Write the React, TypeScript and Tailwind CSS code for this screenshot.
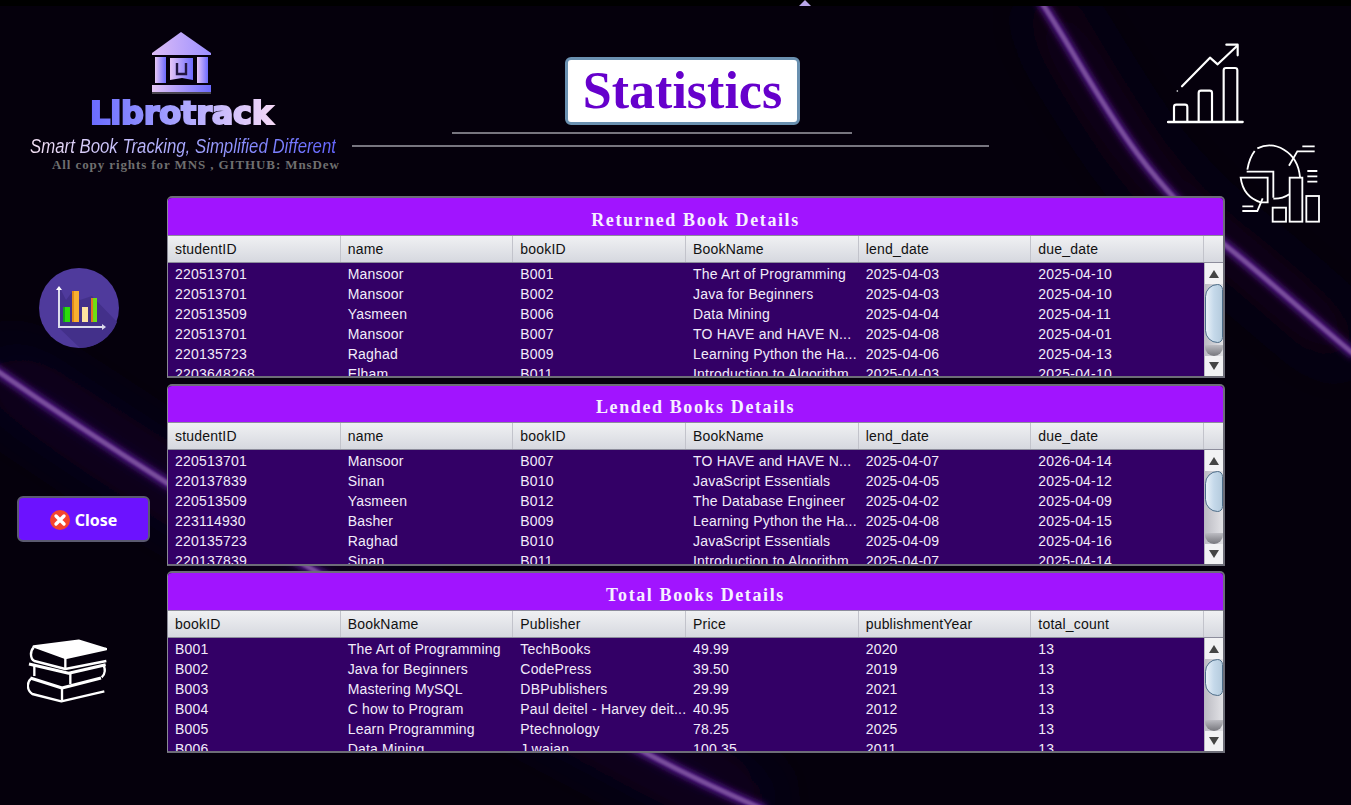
type PanelProps = {
  title: string;
  columns: string[];
  rows: string[][];
  thumbH: string;
  titleH: string;
};

const returned = [
  ["220513701", "Mansoor", "B001", "The Art of Programming", "2025-04-03", "2025-04-10"],
  ["220513701", "Mansoor", "B002", "Java for Beginners", "2025-04-03", "2025-04-10"],
  ["220513509", "Yasmeen", "B006", "Data Mining", "2025-04-04", "2025-04-11"],
  ["220513701", "Mansoor", "B007", "TO HAVE and HAVE N...", "2025-04-08", "2025-04-01"],
  ["220135723", "Raghad", "B009", "Learning Python the Ha...", "2025-04-06", "2025-04-13"],
  ["2203648268", "Elham", "B011", "Introduction to Algorithm...", "2025-04-03", "2025-04-10"],
];

const lended = [
  ["220513701", "Mansoor", "B007", "TO HAVE and HAVE N...", "2025-04-07", "2026-04-14"],
  ["220137839", "Sinan", "B010", "JavaScript Essentials", "2025-04-05", "2025-04-12"],
  ["220513509", "Yasmeen", "B012", "The Database Engineer", "2025-04-02", "2025-04-09"],
  ["223114930", "Basher", "B009", "Learning Python the Ha...", "2025-04-08", "2025-04-15"],
  ["220135723", "Raghad", "B010", "JavaScript Essentials", "2025-04-09", "2025-04-16"],
  ["220137839", "Sinan", "B011", "Introduction to Algorithm...", "2025-04-07", "2025-04-14"],
];

const total = [
  ["B001", "The Art of Programming", "TechBooks", "49.99", "2020", "13"],
  ["B002", "Java for Beginners", "CodePress", "39.50", "2019", "13"],
  ["B003", "Mastering MySQL", "DBPublishers", "29.99", "2021", "13"],
  ["B004", "C how to Program", "Paul deitel - Harvey deit...", "40.95", "2012", "13"],
  ["B005", "Learn Programming", "Ptechnology", "78.25", "2025", "13"],
  ["B006", "Data Mining", "J.waian", "100.35", "2011", "13"],
];

const lendCols = ["studentID", "name", "bookID", "BookName", "lend_date", "due_date"];
const bookCols = ["bookID", "BookName", "Publisher", "Price", "publishmentYear", "total_count"];

const curveA = "M1040,0 C1090,75 1130,170 1225,245 C1270,281 1310,318 1355,355";
const curveB = "M-10,366 Q75,425 167,483 Q400,625 646,753 Q700,782 765,810";

function Background() {
  return (
    <svg className="absolute inset-x-0 top-[6px] w-full h-[799px]" viewBox="0 6 1351 799">
      <defs>
        <filter id="wide" filterUnits="userSpaceOnUse" x="-200" y="-200" width="1800" height="1200">
          <feGaussianBlur stdDeviation="32" />
        </filter>
        <filter id="glow" filterUnits="userSpaceOnUse" x="-200" y="-200" width="1800" height="1200">
          <feGaussianBlur stdDeviation="3" />
        </filter>
        <filter id="soft" filterUnits="userSpaceOnUse" x="-200" y="-200" width="1800" height="1200">
          <feGaussianBlur stdDeviation="0.8" />
        </filter>
      </defs>
      <g fill="none">
        <path d={curveB} stroke="#160630" strokeWidth="40" filter="url(#wide)" />
        <path d={curveA} stroke="#140528" strokeWidth="30" filter="url(#wide)" />
        <path d={curveB} stroke="#4f1485" strokeWidth="10" filter="url(#glow)" />
        <path d={curveA} stroke="#4f1485" strokeWidth="10" filter="url(#glow)" />
        <path d={curveB} stroke="#7a4f9c" strokeWidth="4.5" filter="url(#soft)" />
        <path d={curveA} stroke="#7a4f9c" strokeWidth="4.5" filter="url(#soft)" />
      </g>
    </svg>
  );
}

function LogoMark() {
  return (
    <svg width="60" height="62" viewBox="152 32 60 62">
      <defs>
        <linearGradient id="roof" x1="0" x2="1" y1="0" y2="0">
          <stop offset="0" stopColor="#dcbcf6" />
          <stop offset="1" stopColor="#9c90ff" />
        </linearGradient>
        <linearGradient id="pillar" x1="0" x2="1" y1="0" y2="0">
          <stop offset="0" stopColor="#e6c6f6" />
          <stop offset="1" stopColor="#6d6bff" />
        </linearGradient>
      </defs>
      <polygon points="181,32 211,53 211,55 152,55 152,53" fill="url(#roof)" />
      <rect x="155" y="57" width="11" height="26" fill="url(#pillar)" />
      <path d="M170 58 H193 V80 L182 78 L170 80 Z" fill="url(#pillar)" />
      <path d="M177 63 V74 H186 V63" fill="none" stroke="#221640" strokeWidth="2.4" />
      <rect x="197" y="57" width="11" height="26" fill="url(#pillar)" />
      <rect x="152" y="85" width="59" height="7" fill="url(#pillar)" />
      <rect x="152" y="92" width="59" height="2" fill="#4a4650" />
    </svg>
  );
}

function ChartUpIcon() {
  return (
    <svg width="78" height="82" viewBox="198 125 234 246" fill="none" stroke="white" strokeWidth="6.5" strokeLinecap="round" strokeLinejoin="round">
      <path d="M201 365 H425" strokeWidth="7" />
      <path d="M219 362 V320 Q219 313 226 313 H252 Q259 313 259 320 V362" />
      <path d="M293 362 V278 Q293 271 300 271 H326 Q333 271 333 278 V362" />
      <path d="M368 362 V210 Q368 203 375 203 H402 Q409 203 409 210 V362" />
      <path d="M243 258 L327 172 L350 192 L408 137" />
      <path d="M376 133 H410 V165" />
      <circle cx="229" cy="272" r="2.5" fill="white" stroke="none" />
    </svg>
  );
}

function PieBarsIcon() {
  return (
    <svg width="82" height="81" viewBox="415 428 246 243" fill="none" stroke="white" strokeWidth="5.5">
      <path d="M440 508 C444 485 452 465 462 452 M470 444 C520 420 590 450 598 530" />
      <path d="M438 514 H518 V592" />
      <path d="M518 595 Q545 596 566 582" />
      <path d="M420 532 H501 V606 H480 C445 595 425 570 420 532 Z" />
      <path d="M565 496 L590 453 H642 M605 438 H642" />
      <path d="M620 512 H650 M620 528 H650 M620 544 H650" />
      <path d="M425 618 H458 M425 632 H470 L486 594" />
      <rect x="516" y="622" width="40" height="42" />
      <rect x="567" y="532" width="38" height="132" />
      <rect x="617" y="587" width="38" height="77" />
    </svg>
  );
}

function BarsBadge() {
  return (
    <svg width="80" height="80" viewBox="39 268 80 80">
      <circle cx="79" cy="308" r="40" fill="#4f3a9c" />
      <path d="M60 288 L66 300 L72 292 L80 300 L92 296 L117 322 A40 40 0 0 1 80 348 L58 327 Z" fill="#43308a" />
      <rect x="58" y="288" width="2" height="40" fill="#dcdcec" />
      <rect x="58" y="326" width="46" height="2" fill="#dcdcec" />
      <polygon points="59,286 56,290 62,290" fill="#ffffff" />
      <polygon points="106,327 102,324 102,330" fill="#dcdcec" />
      <rect x="63" y="307" width="7" height="15" fill="#2bdc0a" />
      <rect x="63" y="307" width="2" height="15" fill="#14a020" />
      <rect x="72" y="291" width="7" height="31" fill="#f8b030" />
      <rect x="72" y="291" width="2" height="31" fill="#e08a18" />
      <rect x="82" y="307" width="6" height="15" fill="#fde3a0" />
      <rect x="91" y="298" width="6" height="24" fill="#6ee012" />
      <rect x="91" y="298" width="2" height="24" fill="#e07820" />
    </svg>
  );
}

function BooksIcon() {
  return (
    <svg width="80" height="65" viewBox="80 475 240 195" fill="none" stroke="white" strokeWidth="7" strokeLinejoin="round">
      <polygon points="100,497 235,480 318,505 195,532" fill="white" />
      <path d="M100 500 C88 512 90 535 102 541 L195 565 L318 541" />
      <path d="M195 532 V565" />
      <path d="M86 550 L205 578 L316 552" strokeWidth="9" />
      <path d="M306 552 C318 562 314 582 304 590" />
      <path d="M102 556 V586 M210 578 V610" />
      <path d="M90 592 L185 622 L302 592" strokeWidth="10" />
      <path d="M92 594 C78 606 80 630 96 640 L183 662 L312 632" />
      <path d="M185 622 V660" />
    </svg>
  );
}

function CloseIcon() {
  return (
    <svg width="20" height="20" viewBox="0 0 20 20">
      <circle cx="10" cy="10" r="10" fill="#f4442e" />
      <path d="M6 6 L14 14 M14 6 L6 14" stroke="white" strokeWidth="3.4" strokeLinecap="round" />
    </svg>
  );
}

function Scrollbar({ thumbH }: { thumbH: string }) {
  return (
    <div className="w-[19px] shrink-0 flex flex-col bg-[#f2f2f4] border-l border-[#b8b8c0]">
      <div className="h-[21px] shrink-0 flex items-center justify-center">
        <svg width="10" height="10" viewBox="0 0 10 10"><polygon points="5,1 10,9 0,9" fill="#444444" /></svg>
      </div>
      <div className="flex-1 bg-linear-to-r from-[#bdbdc4] to-[#e2e2e6] flex flex-col overflow-hidden">
        <div className={`${thumbH} shrink-0 rounded-l-[14px] rounded-r-[6px] border border-[#4c6c88] bg-linear-to-r from-[#e9f1f8] via-[#c5d9ea] to-[#b5cbdd]`} />
        <div className="flex-1" />
        <div className="h-[11px] bg-linear-to-b from-[#bcbcc2] to-[#77777d] rounded-b-[10px]" />
      </div>
      <div className="h-[20px] shrink-0 flex items-center justify-center">
        <svg width="10" height="10" viewBox="0 0 10 10"><polygon points="0,1 10,1 5,9" fill="#444444" /></svg>
      </div>
    </div>
  );
}

function Panel({ title, columns, rows, thumbH, titleH }: PanelProps) {
  return (
    <section className="h-[182px] flex flex-col rounded-t-[5px] border-y-2 border-r-2 border-l border-[#6d6d78] border-l-[#8a8a96] overflow-hidden">
      <h2 className={`${titleH} shrink-0 pt-[7px] flex items-center justify-center bg-[#a114ff] text-[#f6f0ff] text-[18px] font-bold tracking-[1.6px] font-['Liberation_Serif',serif]`}>
        {title}
      </h2>
      <div className="h-[28px] shrink-0 flex bg-linear-to-b from-[#f0f1f3] to-[#d6d8df] border-y border-[#8d8d9c] text-[14px] tracking-[0.2px] text-[#111111]">
        <div className="flex-1 grid grid-cols-6">
          {columns.map((col) => (
            <div key={col} className="pl-[7px] flex items-center border-r border-[#c2c3cb]">{col}</div>
          ))}
        </div>
        <div className="w-[19px]" />
      </div>
      <div className="flex-1 flex min-h-0 bg-[#330066]">
        <div className="flex-1 pt-[1px] overflow-hidden">
          {rows.map((row, i) => (
            <div key={i} className="grid grid-cols-6 h-5 text-[14px] leading-5 tracking-[0.2px] text-[#f2ecfa]">
              {row.map((cell, j) => (
                <div key={j} className="pl-[7px] whitespace-nowrap">{cell}</div>
              ))}
            </div>
          ))}
        </div>
        <Scrollbar thumbH={thumbH} />
      </div>
    </section>
  );
}

export default function App() {
  return (
    <div className="relative w-[1351px] h-[805px] overflow-hidden bg-[#05000c] font-['Liberation_Sans',sans-serif]">
      <div className="absolute inset-x-0 top-0 h-[6px] bg-black" />
      <Background />
      <div className="absolute left-[799px] top-0 w-0 h-0 border-x-[6px] border-x-transparent border-b-[6px] border-b-[#b9a6ea]" />

      <div className="relative flex flex-col h-full">
        <header className="h-[196px] shrink-0 flex">
          <div className="w-[352px] shrink-0 pt-[32px] flex flex-col">
            <div className="ml-[152px]"><LogoMark /></div>
            <div className="ml-[90px] mt-[2px] h-[34px] w-[190px] text-[32px] leading-[34px] font-bold bg-linear-to-r from-[#6a6aff] to-[#fadcf6] bg-clip-text text-transparent [-webkit-text-stroke:2px_transparent] font-['DejaVu_Sans',sans-serif] tracking-[-0.2px]">
              Librotrack
            </div>
            <div className="ml-[30px] mt-[5px] w-[360px] origin-left scale-x-[0.84] text-[20px] leading-[23px] italic whitespace-nowrap">
              <span className="bg-linear-to-r from-[#f4e0f4] to-[#6464ff] bg-clip-text text-transparent">Smart Book Tracking, Simplified Different</span>
            </div>
            <div className="ml-[52px] text-[13px] leading-[14px] font-bold tracking-[0.9px] text-[#6f6f6f] whitespace-nowrap font-['Liberation_Serif',serif]">
              All copy rights for MNS , GITHUB: MnsDew
            </div>
          </div>

          <div className="w-[637px] shrink-0 pt-[57px] flex flex-col">
            <div className="ml-[213px] w-[235px] h-[68px] flex items-center justify-center bg-white rounded-[6px] border-[3px] border-[#6a90b0]">
              <h1 className="text-[52px] leading-none font-bold text-[#6600cc] font-['Liberation_Serif',serif]">Statistics</h1>
            </div>
            <div className="ml-[100px] mt-[7px] w-[400px] h-[2px] bg-[#77757f]" />
            <div className="mt-[11px] h-[2px] bg-[#77757f]" />
          </div>

          <div className="flex-1 pt-[42px]">
            <div className="ml-[178px]"><ChartUpIcon /></div>
            <div className="ml-[250px] mt-[19px]"><PieBarsIcon /></div>
          </div>
        </header>

        <div className="flex-1 flex min-h-0">
          <aside className="w-[167px] shrink-0 flex flex-col">
            <div className="ml-[39px] mt-[72px]"><BarsBadge /></div>
            <button className="ml-[17px] mt-[148px] w-[133px] h-[46px] flex items-center justify-center gap-[5px] pt-[1px] bg-[#6c12ff] rounded-[6px] border-2 border-[#5b5a70] text-white text-[16px] font-bold font-['Noto_Sans',sans-serif]">
              <CloseIcon />
              Close
            </button>
            <div className="ml-[27px] mt-[97px]"><BooksIcon /></div>
          </aside>

          <main className="w-[1058px] shrink-0 flex flex-col">
            <Panel title="Returned Book Details" columns={lendCols} rows={returned} thumbH="h-[59px]" titleH="h-[37px]" />
            <div className="mt-[6px]">
              <Panel title="Lended Books Details" columns={lendCols} rows={lended} thumbH="h-[41px]" titleH="h-[36px]" />
            </div>
            <div className="mt-[5px]">
              <Panel title="Total Books Details" columns={bookCols} rows={total} thumbH="h-[37px]" titleH="h-[37px]" />
            </div>
          </main>
        </div>
      </div>
    </div>
  );
}
